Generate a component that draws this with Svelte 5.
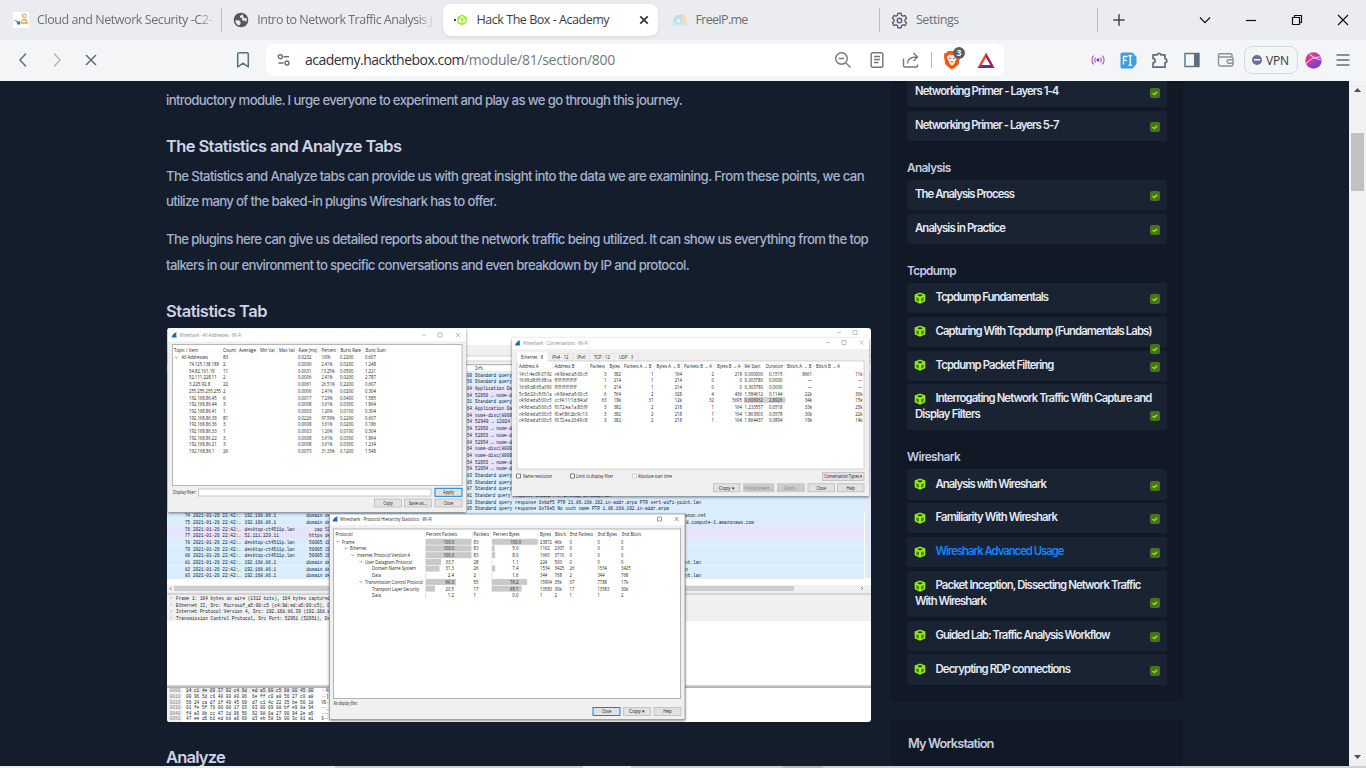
<script>
  // Spreads or tightens the letters of one line so that it fills a given measure.
  function fit(node, width) {
    const natural = node.getBoundingClientRect().width;
    const count = [...node.textContent].length;
    if (count) node.style.letterSpacing = `${(width - natural) / count}px`;
  }

  const groups = [
    { title: null, items: [
      { lines: [['Networking Primer - Layers 1-4', 143.5]] },
      { lines: [['Networking Primer - Layers 5-7', 143.5]] }
    ] },
    { title: ['Analysis', 43.5], items: [
      { lines: [['The Analysis Process', 99]] },
      { lines: [['Analysis in Practice', 90]] }
    ] },
    { title: ['Tcpdump', 49], items: [
      { cube: true, lines: [['Tcpdump Fundamentals', 112.5]] },
      { cube: true, low: true, lines: [['Capturing With Tcpdump (Fundamentals Labs)', 216]] },
      { cube: true, lines: [['Tcpdump Packet Filtering', 118]] },
      { cube: true, lines: [['Interrogating Network Traffic With Capture and', 216], ['Display Filters', 65]] }
    ] },
    { title: ['Wireshark', 53], items: [
      { cube: true, lines: [['Analysis with Wireshark', 110.5]] },
      { cube: true, lines: [['Familiarity With Wireshark', 121.5]] },
      { cube: true, active: true, lines: [['Wireshark Advanced Usage', 128]] },
      { cube: true, lines: [['Packet Inception, Dissecting Network Traffic', 205], ['With Wireshark', 71]] },
      { cube: true, lines: [['Guided Lab: Traffic Analysis Workflow', 174]] },
      { cube: true, lines: [['Decrypting RDP connections', 134.5]] }
    ] }
  ];

  const addrRows = [
    ['', '83', '0.0232', '100%', '0.2200', '0.607'],
    ['74.125.138.188', '2', '0.0006', '2.41%', '0.0200', '1.248'],
    ['54.82.161.19', '11', '0.0031', '13.25%', '0.0500', '1.221'],
    ['52.111.228.11', '2', '0.0006', '2.41%', '0.0200', '2.787'],
    ['3.225.92.8', '22', '0.0061', '26.51%', '0.2200', '0.607'],
    ['255.255.255.255', '2', '0.0006', '2.41%', '0.0200', '0.304'],
    ['192.168.86.45', '6', '0.0017', '7.23%', '0.0400', '1.585'],
    ['192.168.86.44', '3', '0.0008', '3.61%', '0.0300', '1.864'],
    ['192.168.86.41', '1', '0.0003', '1.20%', '0.0100', '0.304'],
    ['192.168.86.39', '81', '0.0226', '97.59%', '0.2200', '0.607'],
    ['192.168.86.36', '3', '0.0008', '3.61%', '0.0200', '0.186'],
    ['192.168.86.33', '1', '0.0003', '1.20%', '0.0100', '0.304'],
    ['192.168.86.22', '3', '0.0008', '3.61%', '0.0300', '1.864'],
    ['192.168.86.21', '3', '0.0008', '3.61%', '0.0300', '1.234'],
    ['192.168.86.1', '26', '0.0073', '31.33%', '0.1200', '1.548']
  ];
  const addrHead = [
    [174, 'Topic / Item', 24], [223, 'Count', 13], [239, 'Average', 17], [260, 'Min Val', 14.5], [279, 'Max Val', 15.5],
    [298.5, 'Rate (ms)', 18.5], [321.5, 'Percent', 14.5], [340.5, 'Burst Rate', 20.5], [365.5, 'Burst Start', 20.5]
  ];

  const convHead = [
    [519, 'Address A', 19.5], [554.5, 'Address B', 20], [590, 'Packets', 15], [609.5, 'Bytes', 10.5], [624, 'Packets A → B', 27.5],
    [656.5, 'Bytes A → B', 23.5], [684, 'Packets B → A', 28], [717, 'Bytes B → A', 23.5], [744.5, 'Rel Start', 16], [766, 'Duration', 17],
    [787, 'Bits/s A → B', 24.5], [816, 'Bits/s B → A', 24]
  ];
  const convRight = [606.5, 621, 653.5, 682, 714, 742, 763, 782.5, 812, 862.5];
  const convRows = [
    ['14:c1:4e:09:37:92', 'c4:9d:ed:a5:00:c5', '3', '382', '1', '164', '2', '218', '0.000000', '0.1515', '8661', '11k'],
    ['16:69:d8:65:68:ca', 'ff:ff:ff:ff:ff:ff', '1', '214', '1', '214', '0', '0', '0.303780', '0.0000', '—', '—'],
    ['16:69:d8:65:af:90', 'ff:ff:ff:ff:ff:ff', '1', '214', '1', '214', '0', '0', '0.303780', '0.0000', '—', '—'],
    ['5c:8d:20:c9:f3:1a', 'c4:9d:ed:a5:00:c5', '6', '764', '2', '328', '4', '436', '1.584612', '0.1144', '22k', '30k'],
    ['c4:9d:ed:a5:00:c5', 'cc:f4:11:1d:84:af', '63', '18k', '31', '12k', '32', '5695', '0.606932', '2.8926', '34k', '15k'],
    ['c4:9d:ed:a5:00:c5', 'f0:72:ea:1a:83:f9', '3', '382', '2', '218', '1', '164', '1.233557', '0.0518', '33k', '25k'],
    ['c4:9d:ed:a5:00:c5', 'f0:ef:86:2b:9c:13', '3', '382', '2', '218', '1', '164', '1.863903', '0.0578', '30k', '22k'],
    ['c4:9d:ed:a5:00:c5', 'f0:72:ea:23:49:c8', '3', '382', '2', '218', '1', '164', '1.864437', '0.0894', '19k', '14k']
  ];

  const hierHead = [
    [335.5, 'Protocol', 17], [426, 'Percent Packets', 31], [473.5, 'Packets', 15.5], [493, 'Percent Bytes', 26.5], [540, 'Bytes', 11],
    [555, 'Bits/s', 11], [570, 'End Packets', 23], [598, 'End Bytes', 19], [622, 'End Bits/s', 19]
  ];
  const hierRows = [
    [342, 'Frame', 12.5, 1, '100.0', 46, '83', '100.0', 46, '23872', '46k', '0', '0', '0'],
    [350, 'Ethernet', 16.5, 1, '100.0', 46, '83', '5.0', 3, '1162', '2307', '0', '0', '0'],
    [357, 'Internet Protocol Version 4', 53, 1, '100.0', 46, '83', '8.0', 3.5, '1660', '3710', '0', '0', '0'],
    [365, 'User Datagram Protocol', 47, 1, '33.7', 15.5, '28', '1.1', .6, '224', '500', '0', '0', '0'],
    [372, 'Domain Name System', 44, 0, '31.3', 14, '26', '7.4', 3.5, '1534', '3425', '26', '1534', '3425'],
    [372, 'Data', 9, 0, '2.4', .8, '2', '1.6', .6, '344', '768', '2', '344', '768'],
    [365, 'Transmission Control Protocol', 58, 1, '66.3', 30.5, '55', '76.2', 35.5, '15904', '35k', '37', '7788', '17k'],
    [372, 'Transport Layer Security', 47, 0, '20.5', 9.5, '17', '65.1', 30, '13583', '30k', '17', '13583', '30k'],
    [372, 'Data', 9, 0, '1.2', .6, '1', '0.0', 0, '1', '2', '1', '1', '2']
  ];

  const infoRows = [
    ['09', 'Standard query', 37, 0], ['50', 'Standard query', 37, 0], ['64', 'Application Da', 37, 1], ['64', '52950 → nume-d', 37, 1],
    ['31', 'Standard query', 37, 0], ['64', 'Application Da', 37, 1], ['64', 'nume-disc(8009', 37, 1], ['54', '52949 → 12024', 35, 1],
    ['54', '52950 → nume-d', 37, 1], ['54', '52953 → nume-d', 37, 1], ['64', '52954 → nume-d', 37, 1], ['64', 'nume-disc(8009', 37, 1],
    ['64', 'nume-disc(8009', 37, 1], ['54', '52953 → nume-d', 37, 1], ['54', '52954 → nume-d', 37, 1], ['83', 'Standard query', 37, 0],
    ['85', 'Standard query', 37, 0], ['87', 'Standard query', 37, 0],
    ['81', 'Standard query response 0xa6b2 PTR desktop-ct4511p.lan', 136, 0],
    ['19', 'Standard query response 0xbdf5 PTR 21.86.168.192.in-addr.arpa PTR sert-wifi-point.lan', 226, 0],
    ['85', 'Standard query response 0x70e5 No such name PTR 1.86.168.192.in-addr.arpa', 194, 0]
  ];
  const listRows = [
    ['74', '192.168.86.1', 'domain', 'de', 0], ['75', '192.168.86.1', 'domain', 'de', 0], ['76', 'desktop-ct4511p.lan', 'cap', '52', 1],
    ['77', '52.111.229.11', 'https', 'de', 1], ['78', 'desktop-ct4511p.lan', '50065', '19', 0], ['79', 'desktop-ct4511p.lan', '50065', '19', 0],
    ['80', 'desktop-ct4511p.lan', '50065', '19', 0], ['81', '192.168.86.1', 'domain', 'de', 0], ['82', '192.168.86.1', 'domain', 'de', 0],
    ['83', '192.168.86.1', 'domain', 'de', 0]
  ];
  const details = [
    ['Frame 1: 164 bytes on wire (1312 bits), 164 bytes captured', 154],
    ['Ethernet II, Src: Microsof_a5:00:c5 (c4:9d:ed:a5:00:c5), D', 154],
    ['Internet Protocol Version 4, Src: 192.168.86.39 (192.168.8', 154],
    ['Transmission Control Protocol, Src Port: 52951 (52951), Ds', 154]
  ];
  const hex = [
    ['0000', '14 c1 4e 09 37 92 c4 9d', 'ed a5 00 c5 08 00 45 00', '··N'],
    ['0010', '00 96 5d c6 40 00 80 06', '6e ff c0 a8 56 27 c0 a8', '··]'],
    ['0020', '56 24 ca d7 1f 49 45 69', 'd7 c1 4c 22 35 be 50 18', 'V$·'],
    ['0030', '01 fe 5f 76 00 00 17 03', '03 00 69 88 bf e9 8a 94', '··_'],
    ['0040', 'f4 a3 8b cc 47 1d 96 56', '92 98 0a 27 90 94 2e a5', '···'],
    ['0050', '47 ee d6 b1 ed b8 a6 69', 'd3 eb 58 1b 00 3c 81 a1', 'G··']
  ];
  const step = 6.69;
</script>

{#snippet t(x, y, s, w, cls = '')}
  <text {x} y={y + 1.9} textLength={w} lengthAdjust="spacingAndGlyphs" class={cls}>{s}</text>
{/snippet}

{#snippet btn(x, y, w, s, tw, kind = '')}
  <rect {x} {y} width={w} height="8" class="btn {kind}" />
  <text x={x + w / 2} y={y + 5.9} text-anchor="middle" textLength={tw} lengthAdjust="spacingAndGlyphs" class={kind === 'off' ? 'dim' : ''}>{s}</text>
{/snippet}

{#snippet fin(x, y)}
  <path d="M{x} {y + 2.6}C{x + .6} {y} {x + 2.4} {y - 2.2} {x + 5.2} {y - 2.8}C{x + 4.4} {y - .8} {x + 4.8} {y + 1} {x + 5.4} {y + 2.6}Z" fill="#1568cf" />
{/snippet}

<div class="screen">
  <div class="tabs">
    <div class="tab">
      <svg width="16" height="16" viewBox="0 0 16 16"><rect width="16" height="16" fill="#fff" /><circle cx="11.300" cy="3.800" r="1.800" fill="none" stroke="#f3a55e" stroke-width="1.200" /><path d="M7.500 12c0-3 1.500-5.300 4-5.300s3.500 2.300 3.500 5.300z" fill="#f6ae6c" /><path d="M9 9.500h4.500M11 8v3" stroke="#fff" stroke-width=".8" /><path d="M3 9l4 .5v3H4.500z" fill="#3d63ac" /><path d="M1 8.500h2.500l1 3" stroke="#9aa8bb" fill="none" /></svg>
      <span class="label faded"><span class="line" use:fit={175}>Cloud and Network Security -C2-</span></span>
    </div>
    <div class="tab ruled">
      <svg width="16" height="16" viewBox="0 0 16 16"><circle cx="8" cy="8" r="7.300" fill="#55585c" /><path d="M2.300 8.300h3.500l1.700 1.500v2l-1.300 1.800C3.600 12.800 2.300 10.800 2.300 8.300zM9.500 1.900 7 4.300v1.500h2.500L8.700 8l4.800 1.400.3-3.600-2.300.6-1.200-2z" fill="#ebecf0" /></svg>
      <span class="label faded"><span class="line" use:fit={175}>Intro to Network Traffic Analysis J</span></span>
    </div>
    <div class="tab active">
      <svg width="16" height="16" viewBox="0 0 16 16"><rect x="1" y="7" width="2" height="2" fill="#3c4043" /><path d="M9 3.300 13 5.400v5L9 12.700 5 10.400v-5zM5 5.400l4 2.200 4-2.200M9 7.600v5" fill="none" stroke="#a4ec2a" stroke-width="1.500" stroke-linejoin="round" /></svg>
      <span class="label"><span class="line" use:fit={132.500}>Hack The Box - Academy</span></span>
      <svg class="shut" width="10" height="10" viewBox="0 0 10 10"><path d="M1.300 1.300l7.400 7.400M8.700 1.300 1.300 8.700" stroke="#35383f" stroke-width="1.800" /></svg>
    </div>
    <div class="tab plain">
      <svg width="16" height="16" viewBox="0 0 16 16" opacity=".55"><path d="M6 3h6l2.500 3v6H8z" fill="#ffcf7d" /><circle cx="6" cy="8" r="4.500" fill="#9bd3f5" /><circle cx="6.500" cy="9" r="2" fill="#e6f8ff" /><path d="M7 3.500h4" stroke="#f7a6a0" stroke-width="1.500" /><path d="M.5 12.500h15" stroke="#aadff2" stroke-width="1.800" /></svg>
      <span class="label"><span class="line" use:fit={52}>FreeIP.me</span></span>
    </div>
    <div class="tab ruled last">
      <svg width="17" height="17" viewBox="0 0 24 24" fill="none" stroke="#5f6078" stroke-width="2"><circle cx="12" cy="12" r="3.200" /><path d="M9.800 1.800h4.400l.7 3 1.900 1.100 2.900-1 2.200 3.800-2.200 2.200v2.200l2.200 2.200-2.200 3.800-2.900-1-1.900 1.100-.7 3H9.800l-.7-3-1.900-1.100-2.900 1-2.200-3.800 2.200-2.200v-2.200L2.100 8.700l2.200-3.800 2.900 1 1.900-1.100z" stroke-linejoin="round" /></svg>
      <span class="label"><span class="line" use:fit={43}>Settings</span></span>
    </div>
    <div class="newtab"><svg width="12" height="12" viewBox="0 0 12 12"><path d="M6 .3v11.400M.3 6h11.400" stroke="#46484d" stroke-width="1.500" /></svg></div>
    <div class="controls">
      <svg width="12" height="12" viewBox="0 0 12 12"><path d="M1 3.500 6 8.700l5-5.200" /></svg>
      <svg width="12" height="12" viewBox="0 0 12 12"><path d="M1 6.500h10" /></svg>
      <svg width="12" height="12" viewBox="0 0 12 12"><path d="M1.500 3.500h7v7h-7zM3.500 3.500v-2h7v7h-2" /></svg>
      <svg width="12" height="12" viewBox="0 0 12 12"><path d="M1 1l10 10M11 1 1 11" /></svg>
    </div>
  </div>

  <div class="toolbar">
    <svg class="back" width="16" height="18" viewBox="0 0 16 18"><path d="M11 2.500 5 9l6 6.500" /></svg>
    <svg class="fwd" width="16" height="18" viewBox="0 0 16 18"><path d="M5 2.500 11 9l-6 6.500" /></svg>
    <svg class="stop" width="16" height="18" viewBox="0 0 16 18"><path d="M3 4l10 10M13 4 3 14" /></svg>
    <svg class="mark" width="14" height="18" viewBox="0 0 14 18"><path d="M1.700 3a1.300 1.300 0 0 1 1.300-1.300h8A1.300 1.300 0 0 1 12.300 3v13L7 12.200 1.700 16z" stroke-linejoin="round" /></svg>
    <div class="omnibox">
      <svg width="14" height="14" viewBox="0 0 14 14" fill="none" stroke="#6b6f78" stroke-width="1.400"><circle cx="3.300" cy="3.700" r="2" /><path d="M6.500 3.700H12M1.500 10h5" /><circle cx="10" cy="10" r="2" /></svg>
      <span class="url"><span class="line host" use:fit={159}>academy.hackthebox.com</span><span class="line" use:fit={151}>/module/81/section/800</span></span>
      <svg class="zoom" width="18" height="18" viewBox="0 0 18 18"><circle cx="7.500" cy="7.500" r="5.800" /><path d="M12 12l4.500 4.500M4.800 7.500h5.400" /></svg>
      <svg class="read" width="16" height="18" viewBox="0 0 16 18"><rect x="2.200" y="1.700" width="11.600" height="14.600" rx="1.800" /><path d="M5 5.500h6M5 8.500h6M5 11.500h4.500" /></svg>
      <svg class="share" width="18" height="18" viewBox="0 0 18 18"><path d="M1.500 7.500v7a1.500 1.500 0 0 0 1.500 1.500h11.500a1 1 0 0 0 1-1v-1.500M5.500 12.500C5.500 8 8.500 6 15 6M11.500 2l4 4-4 4" /></svg>
      <span class="bar"></span>
      <span class="brave">
        <svg width="18" height="20" viewBox="0 0 18 20"><path d="M5 1h8l1.500 1.800 2 .5.600 2.700-1.300 7.500c-.5 2-4.300 4.300-6.800 6-2.500-1.700-6.300-4-6.800-6L.9 6l.6-2.700 2-.5z" fill="#fb5414" /><path d="M6.500 4.500 9 5l2.500-.5L14 6.500l-.7 3-1.300 2-.5 2L9 15.800l-2.500-2.300-.5-2-1.300-2-.7-3z" fill="#fff" /><path d="M6 8l2 .8M12 8l-2 .8M7.500 12.300 9 11.500l1.500.8" stroke="#fb5414" stroke-width="1.100" fill="none" /></svg>
        <b>3</b>
      </span>
      <svg class="bat" width="18" height="17" viewBox="0 0 18 17"><path d="M9 .5.3 16 4.500 13.500 9 5.500z" fill="#ff4724" /><path d="M9 .5 17.700 16l-4.200-2.500L9 5.500z" fill="#9e1f63" /><path d="M.3 16h17.400l-4.200-3H4.500z" fill="#662d91" /></svg>
    </div>
    <div class="actions">
      <svg width="14" height="14" viewBox="0 0 14 14" fill="none" stroke="#b04ac4" stroke-width="1.100"><circle cx="7" cy="7" r="1.400" fill="#8e24aa" stroke="none" /><path d="M4.700 4.700a3.200 3.200 0 0 0 0 4.600M9.300 4.700a3.200 3.200 0 0 1 0 4.600M2.700 2.700a6 6 0 0 0 0 8.600M11.300 2.700a6 6 0 0 1 0 8.600" /></svg>
      <svg width="17" height="17" viewBox="0 0 17 17"><path d="M2 .5h10.500l4 4.500v7l-4 4.500H2A1.500 1.500 0 0 1 .5 15V2A1.500 1.500 0 0 1 2 .5z" fill="#3b9fe3" /><path d="M3.500 12.500v-8h4M3.500 8.300h3.500M8.500 3.500c1 0 1.500.3 1.800.8.300-.5.900-.8 1.800-.8M10.300 4.300v8.400M8.500 13.500c1 0 1.500-.3 1.800-.8.300.5.900.8 1.800.8" stroke="#fff" stroke-width="1.300" fill="none" /></svg>
      <svg width="18" height="18" viewBox="0 0 18 18" fill="none" stroke="#5e6f7c" stroke-width="1.700" stroke-linejoin="round"><path d="M2 3.800h4.200a1.900 1.900 0 0 1 3.700 0H14v4a1.900 1.900 0 0 1 0 3.800v4.600H2v-4.300c2.800-.2 2.800-4.300 0-4.500z" /></svg>
      <svg width="16" height="16" viewBox="0 0 16 16"><rect x="1" y="1.500" width="14" height="13" fill="none" stroke="#5e6f7c" stroke-width="1.400" /><path d="M10 1.500h5v13h-5z" fill="#5e6f7c" /></svg>
      <svg width="18" height="16" viewBox="0 0 18 16" fill="none" stroke="#8693a0" stroke-width="1.400"><path d="M15 5V3a1.200 1.200 0 0 0-1.200-1.200H3A1.600 1.600 0 0 0 3 5h11.500A1.500 1.500 0 0 1 16 6.500v6A1.500 1.500 0 0 1 14.500 14H3.200a1.700 1.700 0 0 1-1.700-1.700V3.500" /><path d="M16 7.700h-4.200a1.700 1.700 0 0 0 0 3.500H16" /></svg>
      <span class="vpn"><i></i><span class="line" use:fit={23}>VPN</span></span>
      <svg width="17" height="17" viewBox="0 0 17 17"><defs><linearGradient id="orb" x1="0" y1="0" x2=".8" y2="1"><stop offset="0" stop-color="#f0386b" /><stop offset=".45" stop-color="#c93aa8" /><stop offset="1" stop-color="#5a46e0" /></linearGradient></defs><circle cx="8.500" cy="8.500" r="8.200" fill="url(#orb)" /><path d="M1 11.500C5 7 10 4.500 16 5M5 2c1.500 2.500 4.500 4.500 11 6" stroke="#fbd0e6" stroke-width="1.100" fill="none" /></svg>
      <svg width="14" height="14" viewBox="0 0 14 14"><path d="M.5 2h13M.5 7h13M.5 12h13" stroke="#5e6f7c" stroke-width="1.400" /></svg>
    </div>
  </div>

  <div class="page">
    <main>
      <p><span class="line" use:fit={516}>introductory module. I urge everyone to experiment and play as we go through this journey.</span></p>
      <h3 class="first"><span class="line" use:fit={235.500}>The Statistics and Analyze Tabs</span></h3>
      <p>
        <span class="line" use:fit={698}>The Statistics and Analyze tabs can provide us with great insight into the data we are examining. From these points, we can</span>
        <span class="line" use:fit={330.500}>utilize many of the baked-in plugins Wireshark has to offer.</span>
      </p>
      <p>
        <span class="line" use:fit={702}>The plugins here can give us detailed reports about the network traffic being utilized. It can show us everything from the top</span>
        <span class="line" use:fit={523}>talkers in our environment to specific conversations and even breakdown by IP and protocol.</span>
      </p>
      <h3 class="second"><span class="line" use:fit={101}>Statistics Tab</span></h3>

      <svg class="shot" width="704" height="394" viewBox="167 328 704 394">
        <defs>
          <filter id="drop" x="-5%" y="-5%" width="110%" height="112%"><feDropShadow dx="0" dy="1.200" stdDeviation="1.800" flood-color="#000" flood-opacity=".5" /></filter>
        </defs>
        <rect x="167" y="328" width="704" height="394" fill="#fff" />
        <path d="M837 332.500h4M853 330.500h4v4h-4z" stroke="#999" stroke-width=".6" fill="none" />
        <rect x="167" y="345" width="704" height="20" fill="#f0f0f0" />
        <rect x="167" y="356" width="704" height="5" fill="#fff" stroke="#aaa" stroke-width=".5" />
        <path d="M466 364.700h46" stroke="#777" stroke-width=".6" />
        {@render t(475, 368, 'Info', 8, 'mono')}
        {#each infoRows as [n, s, w, p], i}
          <rect x="167" y={371.200 + i * step} width="698" height="6.800" fill={p ? '#e6e4fc' : '#d9edfd'} />
          {@render t(467, 374.700 + i * step, n, 5, 'mono')}
          {@render t(475, 374.700 + i * step, s, w, 'mono')}
        {/each}
        <rect x="865" y="371" width="6" height="207" fill="#e9e6fa" />
        {#each listRows as [n, host, port, rest, p], i}
          {@const y = 515.300 + i * step}
          <rect x="167" y={y - 3.400} width="697" height="6.800" fill={p ? '#e6e4fc' : '#d9edfd'} />
          {@render t(185, y, n, 5, 'mono')}
          {@render t(193, y, '2021-01-26 22:42:…', 48, 'mono')}
          {@render t(244.500, y, host, host.length * 2.640, 'mono')}
          {@render t(322.500 - port.length * 2.700, y, port, port.length * 2.700, 'mono')}
          {@render t(325, y, rest, 4.500, 'mono')}
        {/each}
        {@render t(685, 515.300, 'azon.net', 21, 'mono')}
        {@render t(686, 522, '8.compute-1.amazonaws.com', 68, 'mono')}
        {@render t(685, 562, 'nt.lan', 16, 'mono')}
        {@render t(685, 568.800, 'n', 3, 'mono')}
        {@render t(685, 575.500, 'nt.lan', 16, 'mono')}
        <rect x="865" y="511" width="6" height="67" fill="#dcebfb" />
        <rect x="865" y="526" width="6" height="14" fill="#e6e4fc" />
        <rect x="167" y="585" width="704" height="7" fill="#f0f0f0" />
        <rect x="174" y="586" width="620" height="5" fill="#cdcdcd" />
        <path d="M171.500 587l-1.500 1.500 1.500 1.500M861 587l1.500 1.500-1.500 1.500" stroke="#555" stroke-width=".7" fill="none" />
        <path d="M167 593.200h704M167 594.800h704" stroke="#a9a9b0" stroke-width=".7" />
        <rect x="167" y="595.200" width="704" height="26" fill="#f0f0f0" />
        {#each details as [s, w], i}
          <path d="M170.500 {596.500 + i * step}l1.300 1.300-1.300 1.300" stroke="#888" stroke-width=".5" fill="none" />
          {@render t(176, 598 + i * step, s, w, 'mono')}
        {/each}
        <rect x="167" y="685" width="704" height="2.500" fill="#d4d4d8" />
        <path d="M167 687.200h704" stroke="#8d8d96" stroke-width=".9" />
        <rect x="167" y="688" width="15" height="34" fill="#f0f0f0" />
        <rect x="185" y="688" width="129" height="5.500" fill="#ececec" />
        {#each hex as [o, a, b, c], i}
          {@render t(169.500, 690.500 + i * 5.600, o, 11, 'mono dim')}
          {@render t(186, 690.500 + i * 5.600, a, 61, 'mono')}
          {@render t(252, 690.500 + i * 5.600, b, 61.500, 'mono')}
          {@render t(321.500, 690.500 + i * 5.600, c, 7, 'mono')}
        {/each}

        <g>
          <rect x="168" y="328.500" width="298" height="183.500" fill="#f0f0f0" filter="url(#drop)" />
          <rect x="168" y="328.500" width="298" height="13" fill="#fff" />
          {@render fin(171.500, 335)}
          {@render t(179.500, 335, 'Wireshark · All Addresses · Wi-Fi', 62, 'dim')}
          <path d="M422 335h4M438 333h4v4h-4zM456 333l4 4M460 333l-4 4" stroke="#999" stroke-width=".6" fill="none" />
          <rect x="172.500" y="344.700" width="289.500" height="141" fill="#fff" stroke="#8e8e8e" stroke-width=".6" />
          <path d="M221 346v8M237 346v8M257 346v8M277 346v8M296 346v8M319 346v8M338 346v8M363 346v8" stroke="#ddd" stroke-width=".5" />
          {#each addrHead as [x, s, w]}{@render t(x, 350, s, w)}{/each}
          <path d="M175 356.800l1.400 1.400 1.400-1.400" stroke="#555" stroke-width=".6" fill="none" />
          {@render t(181.500, 357.500, 'All Addresses', 26.500)}
          {#each addrRows as [a, c, r, p, b, s], i}
            {@const y = 357.500 + i * step}
            {#if a}{@render t(189, y, a, a.length * 2.130)}{/if}
            {@render t(223, y, c, c.length * 2.600)}
            {@render t(298, y, r, 13.500)}
            {@render t(321.500, y, p, p.length * 2.200)}
            {@render t(340, y, b, 13.500)}
            {@render t(365, y, s, 11)}
          {/each}
          {@render t(173, 492.300, 'Display filter:', 23)}
          <rect x="198.500" y="489" width="232.500" height="7" fill="#fff" stroke="#999" stroke-width=".5" />
          {@render btn(435, 488.300, 27, 'Apply', 11, 'blue')}
          {@render btn(374.500, 499, 27, 'Copy', 9.500)}
          {@render btn(404.500, 499, 27, 'Save as…', 18)}
          {@render btn(435, 499, 27, 'Close', 9.500)}
        </g>

        <g>
          <rect x="512" y="338" width="357" height="158" fill="#f0f0f0" filter="url(#drop)" />
          <rect x="512" y="338" width="357" height="11" fill="#fff" />
          {@render fin(515, 343)}
          {@render t(523, 343, 'Wireshark · Conversations · Wi-Fi', 65, 'dim')}
          <path d="M826 342.500h4M842 340.500h4v4h-4zM859.500 340.500l4 4M863.500 340.500l-4 4" stroke="#999" stroke-width=".6" fill="none" />
          <path d="M547.500 353.500h91v8h-91zM573 353.500v8M589.500 353.500v8M614 353.500v8" fill="#f0f0f0" stroke="#d8d8d8" stroke-width=".5" />
          <rect x="517" y="361" width="347" height="108" fill="#fff" stroke="#aaa" stroke-width=".5" />
          <rect x="517" y="352.500" width="30.500" height="9.500" fill="#fff" />
          {@render t(521, 356.800, 'Ethernet · 8', 22)}
          {@render t(552, 356.800, 'IPv4 · 12', 16.500)}
          {@render t(577, 356.800, 'IPv6', 8.500)}
          {@render t(594, 356.800, 'TCP · 12', 16)}
          {@render t(619, 356.800, 'UDP · 3', 14)}
          <path d="M552.500 363v7M588 363v7M608 363v7M622 363v7M654.500 363v7M682.500 363v7M715 363v7M743 363v7M765 363v7M785 363v7M814 363v7" stroke="#ddd" stroke-width=".5" />
          {#each convHead as [x, s, w]}{@render t(x, 366, s, w)}{/each}
          <rect x="744" y="397" width="41.500" height="6" fill="#d3d3d3" />
          {#each convRows as row, i}
            {@const y = 373.600 + i * step}
            {@render t(519, y, row[0], 32.500)}
            {@render t(554.500, y, row[1], row[1][0] === 'f' && row[1][1] === 'f' ? 22 : 33)}
            {#each row.slice(2) as v, k}
              <text x={convRight[k]} y={y + 1.900} text-anchor="end" textLength={v === '—' ? 4.500 : v.length * 2.450 - (v.includes('.') ? 1.200 : 0)} lengthAdjust="spacingAndGlyphs">{v}</text>
            {/each}
          {/each}
          <path d="M516.500 474h4v4h-4zM570.500 474h4v4h-4z" fill="#fff" stroke="#333" stroke-width=".6" />
          <path d="M632.500 474h4v4h-4z" fill="#fff" stroke="#bbb" stroke-width=".6" />
          {@render t(523, 476.300, 'Name resolution', 29)}
          {@render t(576, 476.300, 'Limit to display filter', 37)}
          {@render t(638, 476.300, 'Absolute start time', 34)}
          {@render btn(822.500, 472.500, 41.500, 'Conversation Types ▾', 38)}
          {@render btn(713.500, 483.800, 26.500, 'Copy    ▾', 16)}
          {@render btn(743.500, 483.800, 30.500, 'Follow Stream…', 28, 'off')}
          {@render btn(777.500, 483.800, 27, 'Graph…', 14, 'off')}
          {@render btn(808, 483.800, 26.500, 'Close', 9.500)}
          {@render btn(837.500, 483.800, 26.500, 'Help', 8.500)}
        </g>

        <g>
          <rect x="329.500" y="514" width="355.500" height="205.500" fill="#f0f0f0" filter="url(#drop)" />
          <rect x="329.500" y="514" width="355.500" height="11" fill="#fff" />
          <path d="M329.500 514h355.500v205.500h-355.500z" fill="none" stroke="#777" stroke-width=".6" />
          {@render fin(332.500, 519)}
          {@render t(340, 519.300, 'Wireshark · Protocol Hierarchy Statistics · Wi-Fi', 92)}
          <path d="M657.500 517h4v4h-4zM674.500 517l4 4M678.500 517l-4 4" stroke="#555" stroke-width=".6" fill="none" />
          <rect x="333.500" y="529" width="347.200" height="169.500" fill="#fff" stroke="#888" stroke-width=".6" />
          <path d="M425 530v8M472.500 530v8M491 530v8M538.500 530v8M553.500 530v8M568 530v8M596 530v8M620 530v8" stroke="#ddd" stroke-width=".5" />
          {#each hierHead as [x, s, w]}{@render t(x, 534, s, w)}{/each}
          {#each hierRows as [x, name, w, open, pp, pw, pk, bp, bw, by, bits, ep, eb, ebits], i}
            {@const y = 541.800 + i * step}
            <rect x="425.500" y={y - 3} width={pw} height="6" fill="#c9c9c9" />
            <rect x="491.700" y={y - 3} width={bw} height="6" fill="#c9c9c9" />
            {#if open}<path d="M{x - 5.500} {y - .9}l1.400 1.400 1.400-1.400" stroke="#555" stroke-width=".6" fill="none" />{/if}
            {@render t(x, y, name, w)}
            <text x="454" y={y + 1.900} text-anchor="end" textLength={pp.length * 2.100} lengthAdjust="spacingAndGlyphs">{pp}</text>
            {@render t(473.500, y, pk, pk.length * 2.500)}
            <text x={bp === '100.0' ? 521 : 518.500} y={y + 1.900} text-anchor="end" textLength={bp.length * 2.100} lengthAdjust="spacingAndGlyphs">{bp}</text>
            {@render t(540, y, by, by.length * 2.400)}
            {@render t(554.500, y, bits, bits.length * 2.450)}
            {@render t(569.500, y, ep, ep.length * 2.400)}
            {@render t(597.500, y, eb, eb.length * 2.350)}
            {@render t(621, y, ebits, ebits.length * 2.400)}
          {/each}
          {@render t(333.500, 702.700, 'No display filter.', 24.500, 'ital')}
          {@render btn(593, 707.500, 27, 'Close', 9.500, 'blue')}
          {@render btn(623.500, 707.500, 27, 'Copy    ▾', 16)}
          {@render btn(654, 707.500, 27, 'Help', 8.500)}
        </g>
      </svg>

      <h3 class="third"><span class="line" use:fit={59}>Analyze</span></h3>
    </main>

    <aside>
      <section class="panel toc">
        {#each groups as group}
          {#if group.title}<h4><span class="line" use:fit={group.title[1]}>{group.title[0]}</span></h4>{/if}
          <ul>
            {#each group.items as item}
              <li class:active={item.active}>
                {#each item.lines as [text, width], n}
                  <div class="row">
                    {#if item.cube && n === 0}
                      <svg width="12" height="12" viewBox="0 0 12 12"><path d="M6 .5 11.300 2.500v6.700L6 11.700.7 9.200V2.500z" fill="#96f00e" /><path d="M3 3.200 6 2l3 1.200-3 1.200z" fill="#26381e" /><path d="M2.300 5l2.700 1.200v3.600L2.300 8.400zM9.700 5 7 6.200v3.600l2.700-1.400z" fill="#4c8018" /></svg>
                    {/if}
                    <span class="line" use:fit={width}>{text}</span>
                  </div>
                {/each}
                <span class="done" class:low={item.low}><svg width="10" height="10" viewBox="0 0 10 10"><path d="M2.500 5l1.700 1.500 3-2.700" fill="none" stroke="#8fe010" stroke-width="1.600" /></svg></span>
              </li>
            {/each}
          </ul>
        {/each}
      </section>
      <section class="panel work"><span class="line" use:fit={85.500}>My Workstation</span></section>
    </aside>

    <div class="scroll">
      <svg width="17" height="17" viewBox="0 0 17 17"><path d="M5 11h7L8.500 7z" fill="#505050" /></svg>
      <div class="thumb"></div>
      <svg class="down" width="17" height="17" viewBox="0 0 17 17"><path d="M5 6h7l-3.500 4z" fill="#505050" /></svg>
    </div>
  </div>
  <div class="strip"><i></i><i></i><i></i></div>
</div>

<style>
  :global(body) { margin: 0; overflow: hidden; }
  .screen { width: 1366px; height: 768px; display: flex; flex-direction: column; overflow: hidden; font-family: "Open Sans", "Noto Sans", sans-serif; background: #141d2b; }
  svg { display: block; flex: none; }
  .line { display: inline-block; white-space: pre; }

  .tabs { height: 40px; flex: none; display: flex; align-items: center; background: #ebecf0; padding-left: 2px; box-sizing: border-box; font-size: 12.500px; color: #6d6f74; }
  .tab { width: 219.300px; height: 32px; box-sizing: border-box; display: flex; align-items: center; padding: 0 9px 0 11px; flex: none; }
  .tab:first-child { padding-right: 5px; }
  .tab svg { margin-right: 8px; }
  .ruled::before { content: ""; width: 1px; height: 24px; background: #b9bbc0; margin-left: -12px; margin-right: 11px; flex: none; }
  .tab.last { width: 219px; padding-right: 0; }
  .tab.last::after { content: ""; width: 1px; height: 24px; background: #b9bbc0; flex: none; }
  .tab.ruled:nth-child(2) { padding-right: 6px; }
  .label { overflow: hidden; line-height: 20px; flex: 1; white-space: nowrap; }
  .faded { -webkit-mask-image: linear-gradient(90deg, #000 90%, transparent); mask-image: linear-gradient(90deg, #000 90%, transparent); }
  .tab.active { width: 215px; background: #fff; border-radius: 8px; margin: 0 2px; padding-left: 10px; color: #3b3e46; box-shadow: 0 1px 3px rgba(0, 0, 0, .1); }
  .tab.active .shut { margin-right: 0; }
  .tab.plain, .tab.ruled { padding-left: 12px; }
  .newtab { width: 42px; display: flex; justify-content: center; }
  .controls { margin-left: 59px; display: flex; gap: 34px; }
  .controls path { fill: none; stroke: #111; stroke-width: 1.200; }

  .toolbar { height: 41px; flex: none; display: flex; align-items: center; background: #f3f5f7; box-sizing: border-box; padding: 0 15px 1px; }
  .toolbar > svg path { fill: none; stroke: #5e6f7c; stroke-width: 1.500; }
  .fwd { margin-left: 18px; opacity: .45; }
  .stop { margin-left: 18px; }
  .mark { margin-left: 137px; }
  .omnibox { margin-left: 16px; width: 738px; flex: none; height: 32px; box-sizing: border-box; border-radius: 8px; background: #fff; display: flex; align-items: center; padding: 0 9px 0 11px; }
  .url { margin-left: 14px; flex: 1; font-size: 14px; line-height: 20px; color: #74777d; white-space: nowrap; }
  .host { color: #2f3138; }
  .zoom, .read, .share { fill: none; stroke: #74777c; stroke-width: 1.400; }
  .read { margin-left: 17px; }
  .share { margin-left: 17px; }
  .bar { width: 1px; height: 16px; background: #b5b7bc; margin-left: 11px; }
  .brave { position: relative; margin-left: 11px; width: 18px; }
  .brave b { position: absolute; left: 10px; top: -3px; width: 12px; height: 12px; border-radius: 6px; background: #5b5e6b; color: #fff; font-size: 8px; line-height: 12px; text-align: center; }
  .bat { margin-left: 16px; }
  .actions { margin-left: 87px; display: flex; align-items: center; }
  .actions > :nth-child(2) { margin-left: 15px; }
  .actions > :nth-child(3) { margin-left: 14px; }
  .actions > :nth-child(4) { margin-left: 15px; }
  .actions > :nth-child(5) { margin-left: 17px; }
  .vpn { width: 54px; height: 28px; box-sizing: border-box; margin-left: 9px; border: 1px solid #cfd9e2; border-radius: 8px; display: flex; align-items: center; gap: 4px; padding-left: 7px; font-size: 12px; color: #33363f; }
  .vpn i { width: 10px; height: 10px; border-radius: 5px; background: linear-gradient(#fff, #fff) center / 6px 1.500px no-repeat #6b7094; }
  .actions > :nth-child(7) { margin-left: 7px; }
  .actions > :nth-child(8) { margin-left: 14px; }

  .page { flex: 1; min-height: 0; display: flex; overflow: hidden; font-family: Inter, "Liberation Sans", sans-serif; }
  main { width: 705px; margin-left: 166px; padding-top: 7px; color: #a4b1cd; font-size: 13.200px; font-weight: 500; flex: none; }
  main p { margin: 0 0 12.500px; line-height: 25.500px; }
  main p .line { display: block; width: max-content; }
  main h3 { margin: 0; height: 20px; line-height: 20px; font-size: 16.500px; font-weight: 600; color: #ccd4e6; }
  h3.first { margin: 22px 0 8px; }
  main p:first-child { margin-bottom: 0; }
  h3.second { margin: 23px 0 7px; }
  h3.third { margin-top: 25px; }
  .shot { margin-left: 1px; border-radius: 3px; font-family: "Open Sans", "Noto Sans", sans-serif; }
  .shot text { font-size: 5.300px; fill: #1c1c1c; }
  .shot .mono { font-family: "Liberation Mono", monospace; font-size: 5.200px; fill: #14222e; }
  .shot .dim { fill: #858585; }
  .shot .ital { font-style: italic; font-size: 4.500px; }
  .btn { fill: #e1e1e1; stroke: #adadad; stroke-width: .6; }
  .btn.blue { stroke: #0078d7; stroke-width: .9; }
  .btn.off { fill: #cccccc; stroke: #bfbfbf; }

  aside { width: 292px; margin-left: 20px; flex: none; font-size: 11.300px; font-weight: 600; color: #e4e9f2; }
  .panel { background: #111927; padding: 0 16px; }
  .toc { height: 620px; box-sizing: border-box; overflow: hidden; }
  ul { list-style: none; margin: 0; padding: 0; display: flex; flex-direction: column; gap: 3.600px; }
  .toc ul:first-child { margin-top: -4px; }
  li { position: relative; background: #1a2332; border-radius: 3px; padding: 6.200px 8px 8px; }
  .row { display: flex; align-items: center; height: 16px; line-height: 16px; }
  .row svg { margin: 1px 9.500px 0 -1px; }
  .active { color: #0d86ff; }
  h4 { margin: 0; height: 39px; box-sizing: border-box; padding-top: 19px; font-size: 11.800px; line-height: 17px; font-weight: 600; color: #c3cde0; }
  .done { position: absolute; right: 7px; bottom: 9px; width: 10px; height: 10px; border-radius: 2px; background: #47731c; z-index: 1; }
  .done.low { bottom: -7px; }
  .work { margin-top: 19px; height: 60px; line-height: 47px; font-size: 12.800px; color: #c3cde0; padding-left: 17px; }

  .scroll { width: 17px; margin-left: auto; background: #f1f1f1; display: flex; flex-direction: column; align-items: center; flex: none; }
  .thumb { width: 13px; height: 58px; margin-top: 35px; background: #c1c1c1; }
  .scroll .down { margin-top: auto; }
  .strip { height: 2px; flex: none; display: flex; background: #d2d2d2; }
  .strip i { display: block; height: 2px; }
  .strip i:nth-child(1) { width: 335px; background: #efefef; }
  .strip i:nth-child(2) { width: 48px; margin-left: 248px; background: #f2f2f2; }
  .strip i:nth-child(3) { width: 40px; margin-left: 152px; background: #b8b8b8; }
</style>
